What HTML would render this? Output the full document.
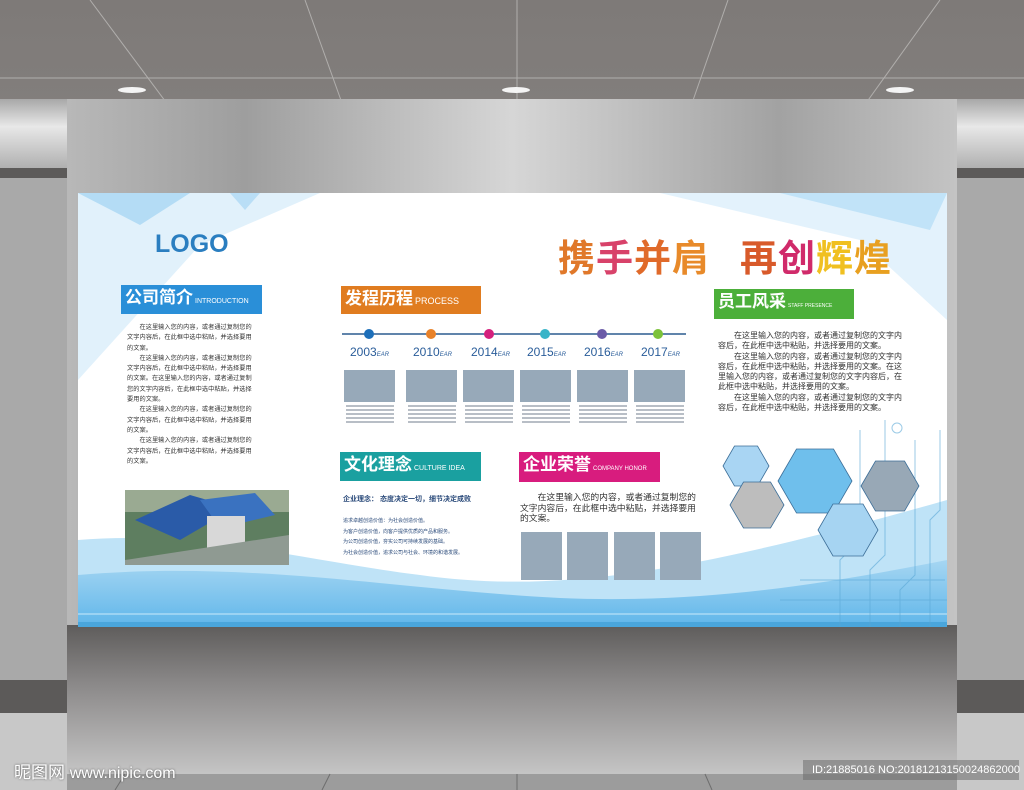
<!DOCTYPE html>
<html><head><meta charset="utf-8"><style>
*{margin:0;padding:0;box-sizing:border-box}
body{width:1024px;height:790px;overflow:hidden;position:relative;font-family:"Liberation Sans","Noto Sans CJK SC",sans-serif;background:#8e8c8b}
.abs{position:absolute}
.t{font-size:8px;line-height:10.3px;color:#333;font-family:"Liberation Sans","Noto Sans CJK SC",sans-serif}
.hd{position:absolute;color:#fff;font-weight:bold;font-size:17px;line-height:25px;padding-left:4px;white-space:nowrap}
.hd span{font-size:7px;font-weight:normal;margin-left:2px}
.yr{position:absolute;top:345px;font-size:12px;color:#2a5d9a}
.yr i{font-size:6px}
.gr{position:absolute;top:370px;width:51px;height:32px;background:#97a9b9}
.sm{position:absolute;top:404px;width:48px;height:20px;background:repeating-linear-gradient(#fff 0,#fff 1px,#b8bec6 1px,#b8bec6 3px,#fff 3px,#fff 4px)}
</style></head><body>
<svg class="abs" style="left:0;top:0" width="1024" height="790">
<defs>
<linearGradient id="ceil" x1="0" y1="0" x2="0" y2="1"><stop offset="0" stop-color="#7e7a78"/><stop offset="1" stop-color="#9a9896"/></linearGradient>
<linearGradient id="side" x1="0" y1="0" x2="0" y2="1"><stop offset="0" stop-color="#a8a8a8"/><stop offset=".4" stop-color="#e8e8e8"/><stop offset="1" stop-color="#b0b0b0"/></linearGradient>
<linearGradient id="wall" x1="0" y1="0" x2="1" y2="0"><stop offset="0" stop-color="#b8b8b8"/><stop offset=".2" stop-color="#9e9e9e"/><stop offset=".5" stop-color="#d6d6d6"/><stop offset=".8" stop-color="#a2a2a2"/><stop offset="1" stop-color="#c4c4c4"/></linearGradient>
<linearGradient id="wall2" x1="0" y1="0" x2="0" y2="1"><stop offset="0" stop-color="#5e5c5b"/><stop offset=".35" stop-color="#8a8888"/><stop offset="1" stop-color="#cfcfcf"/></linearGradient>
<linearGradient id="blue" x1="0" y1="0" x2="0" y2="1"><stop offset="0" stop-color="#a6d6f2"/><stop offset="1" stop-color="#5fb6ea"/></linearGradient>
</defs>
<rect width="1024" height="790" fill="url(#ceil)"/>
<g stroke="#b0aeac" stroke-width="1" fill="none"><line x1="90" y1="0" x2="235" y2="195"/><line x1="305" y1="0" x2="375" y2="195"/><line x1="517" y1="0" x2="517" y2="195"/><line x1="728" y1="0" x2="660" y2="195"/><line x1="940" y1="0" x2="800" y2="195"/><line x1="0" y1="78" x2="1024" y2="78"/></g>
<rect x="0" y="99" width="67" height="69" fill="url(#side)"/><rect x="957" y="99" width="67" height="69" fill="url(#side)"/>
<rect x="0" y="168" width="67" height="10" fill="#5c5a59"/><rect x="957" y="168" width="67" height="10" fill="#5c5a59"/>
<rect x="0" y="178" width="67" height="502" fill="#a9a9a9"/><rect x="957" y="178" width="67" height="502" fill="#a9a9a9"/>
<rect x="0" y="680" width="67" height="33" fill="#5c5a59"/><rect x="957" y="680" width="67" height="33" fill="#5c5a59"/>
<rect x="0" y="713" width="67" height="77" fill="#c8c8c8"/><rect x="957" y="713" width="67" height="77" fill="#c8c8c8"/>
<ellipse cx="132" cy="90" rx="14" ry="3" fill="#f4f4f4"/><ellipse cx="516" cy="90" rx="14" ry="3" fill="#f4f4f4"/><ellipse cx="900" cy="90" rx="14" ry="3" fill="#f4f4f4"/>
<rect x="67" y="99" width="890" height="530" fill="url(#wall)"/>
<rect x="67" y="625" width="890" height="165" fill="url(#wall2)"/>
<rect x="67" y="774" width="890" height="16" fill="#9c9c9c"/>
<g stroke="#6e6e6e"><line x1="125" y1="774" x2="115" y2="790"/><line x1="330" y1="774" x2="322" y2="790"/><line x1="517" y1="774" x2="517" y2="790"/><line x1="705" y1="774" x2="712" y2="790"/></g>
<g>
<rect x="78" y="193" width="869" height="434" fill="#fff"/>
<polygon points="78,193 320,193 200,245 78,380" fill="#d4ebfa" opacity=".7"/>
<polygon points="78,193 190,193 140,225" fill="#a9d7f4" opacity=".8"/>
<polygon points="230,193 260,193 245,210" fill="#b9def6"/>
<polygon points="660,193 947,193 947,320 860,240" fill="#dceffb" opacity=".8"/>
<polygon points="780,193 947,193 930,230" fill="#b8def6" opacity=".8"/>
<path d="M78,540 C200,530 300,560 420,575 C560,595 700,570 947,500 L947,627 L78,627 Z" fill="#bfe3f7"/>
<path d="M78,575 C250,560 400,590 560,598 C700,604 820,585 947,560 L947,627 L78,627 Z" fill="url(#blue)"/>
<rect x="78" y="613" width="869" height="2" fill="#9bd3f3"/>
<rect x="78" y="622" width="869" height="5" fill="#4aa6dc"/>
<g stroke="#5aa8d6" stroke-width="1" fill="none" opacity=".6"><path d="M840,627 V560 L860,540 V430"/><path d="M870,627 V570 L885,555 V420"/><path d="M900,627 V590 L915,575 V440"/><path d="M930,627 V520 L940,510 V430"/><path d="M780,600 H947"/><path d="M800,580 H945"/><circle cx="897" cy="428" r="5"/></g>
<g stroke="#3c6e98" stroke-width=".8">
<polygon points="723,466 734.5,446 757.5,446 769,466 757.5,486 734.5,486" fill="#a9d5f3"/>
<polygon points="730,505 743.5,482 770.5,482 784,505 770.5,528 743.5,528" fill="#bdbdbd"/>
<polygon points="778,481 796.5,449 833.5,449 852,481 833.5,513 796.5,513" fill="#6fbfec"/>
<polygon points="861,486 875.5,461 904.5,461 919,486 904.5,511 875.5,511" fill="#98a8b6"/>
<polygon points="818,530 833,504 863,504 878,530 863,556 833,556" fill="#a6d4f2"/>
</g>
<line x1="342" y1="334" x2="686" y2="334" stroke="#2b5b8f" stroke-width="1.5"/>
<circle cx="369" cy="334" r="5" fill="#1d6fba"/><circle cx="431" cy="334" r="5" fill="#e8822a"/><circle cx="489" cy="334" r="5" fill="#d4207d"/><circle cx="545" cy="334" r="5" fill="#38b4c8"/><circle cx="602" cy="334" r="5" fill="#6a5ba8"/><circle cx="658" cy="334" r="5" fill="#7cc23a"/>
<rect x="125" y="490" width="164" height="75" fill="#5e7e60"/>
<rect x="125" y="490" width="164" height="22" fill="#9aaa92"/>
<polygon points="135,520 190,495 235,508 180,540" fill="#2a5ba8"/>
<polygon points="200,500 255,493 275,515 220,528" fill="#3a72c0"/>
<rect x="207" y="516" width="38" height="38" fill="#d8d8d8"/>
<polygon points="125,560 289,535 289,565 125,565" fill="#8f9a92"/>
</g>
</svg>

<div class="abs" style="left:155px;top:230px;font-size:25px;font-weight:bold;color:#2a7ec0">LOGO</div>
<div class="abs" style="left:558px;top:228px;font-size:37px;font-weight:bold;letter-spacing:1px;white-space:nowrap"><span style="color:#e0782a">携</span><span style="color:#d8426a">手</span><span style="color:#e06a2a">并</span><span style="color:#e88a2a">肩</span><span style="display:inline-block;width:30px"></span><span style="color:#d85a2a">再</span><span style="color:#d02a6a">创</span><span style="color:#f0c020">辉</span><span style="color:#e8a020">煌</span></div>

<div class="hd" style="left:121px;top:285px;width:141px;background:#2a8fd8">公司简介<span>INTRODUCTION</span></div>
<div class="hd" style="left:341px;top:286px;width:140px;background:#e07c20">发程历程<span style="font-size:9px">PROCESS</span></div>
<div class="hd" style="left:714px;top:289px;width:140px;background:#4caf3a">员工风采<span style="font-size:5px">STAFF PRESENCE</span></div>
<div class="hd" style="left:340px;top:452px;width:141px;background:#1aa0a0">文化理念<span>CULTURE IDEA</span></div>
<div class="hd" style="left:519px;top:452px;width:141px;background:#d81c7e">企业荣誉<span style="font-size:6px">COMPANY HONOR</span></div>

<div class="abs t" style="left:127px;top:323px;width:126px;font-size:6.2px;letter-spacing:0.05px">&emsp;&emsp;在这里输入您的内容，或者通过复制您的文字内容后，在此框中选中粘贴，并选择要用的文案。<br>&emsp;&emsp;在这里输入您的内容，或者通过复制您的文字内容后，在此框中选中粘贴，并选择要用的文案。在这里输入您的内容，或者通过复制您的文字内容后，在此框中选中粘贴，并选择要用的文案。<br>&emsp;&emsp;在这里输入您的内容，或者通过复制您的文字内容后，在此框中选中粘贴，并选择要用的文案。<br>&emsp;&emsp;在这里输入您的内容，或者通过复制您的文字内容后，在此框中选中粘贴，并选择要用的文案。</div>
<div class="abs t" style="left:718px;top:331px;width:188px">&emsp;&emsp;在这里输入您的内容，或者通过复制您的文字内容后，在此框中选中粘贴，并选择要用的文案。<br>&emsp;&emsp;在这里输入您的内容，或者通过复制您的文字内容后，在此框中选中粘贴，并选择要用的文案。在这里输入您的内容，或者通过复制您的文字内容后，在此框中选中粘贴，并选择要用的文案。<br>&emsp;&emsp;在这里输入您的内容，或者通过复制您的文字内容后，在此框中选中粘贴，并选择要用的文案。</div>
<div class="abs t" style="left:520px;top:492px;width:182px;font-size:8.8px;line-height:10.5px">&emsp;&emsp;在这里输入您的内容，或者通过复制您的文字内容后，在此框中选中粘贴，并选择要用的文案。</div>

<div class="abs" style="left:343px;top:494px;font-size:7px;font-weight:bold;color:#2a4a7a;white-space:nowrap">企业理念：&nbsp;态度决定一切，细节决定成败</div>
<div class="abs" style="left:343px;top:516px;font-size:5px;line-height:10.5px;color:#2a4a7a;white-space:nowrap">追求卓越创造价值：为社会创造价值。<br>为客户创造价值，向客户提供优质的产品和服务。<br>为公司创造价值，夯实公司可持续发展的基础。<br>为社会创造价值，追求公司与社会、环境的和谐发展。</div>

<div class="yr" style="left:350px">2003<i>EAR</i></div>
<div class="yr" style="left:413px">2010<i>EAR</i></div>
<div class="yr" style="left:471px">2014<i>EAR</i></div>
<div class="yr" style="left:527px">2015<i>EAR</i></div>
<div class="yr" style="left:584px">2016<i>EAR</i></div>
<div class="yr" style="left:641px">2017<i>EAR</i></div>
<div class="gr" style="left:344px"></div><div class="gr" style="left:406px"></div><div class="gr" style="left:463px"></div><div class="gr" style="left:520px"></div><div class="gr" style="left:577px"></div><div class="gr" style="left:634px"></div>
<div class="sm" style="left:346px"></div><div class="sm" style="left:408px"></div><div class="sm" style="left:465px"></div><div class="sm" style="left:522px"></div><div class="sm" style="left:579px"></div><div class="sm" style="left:636px"></div>

<div class="abs" style="left:521px;top:532px;width:41px;height:48px;background:#97a9b9"></div>
<div class="abs" style="left:567px;top:532px;width:41px;height:48px;background:#97a9b9"></div>
<div class="abs" style="left:614px;top:532px;width:41px;height:48px;background:#97a9b9"></div>
<div class="abs" style="left:660px;top:532px;width:41px;height:48px;background:#97a9b9"></div>

<div class="abs" style="left:14px;top:758px;font-size:17px;color:#fff;white-space:nowrap;text-shadow:0 0 2px #555">昵图网 <span style="font-size:16px">www.nipic.com</span></div>
<div class="abs" style="left:803px;top:760px;width:216px;height:20px;background:rgba(110,110,110,.55);color:#fff;font-size:11px;line-height:20px;padding-left:9px;white-space:nowrap">ID:21885016 NO:20181213150024862000</div>
</body></html>
